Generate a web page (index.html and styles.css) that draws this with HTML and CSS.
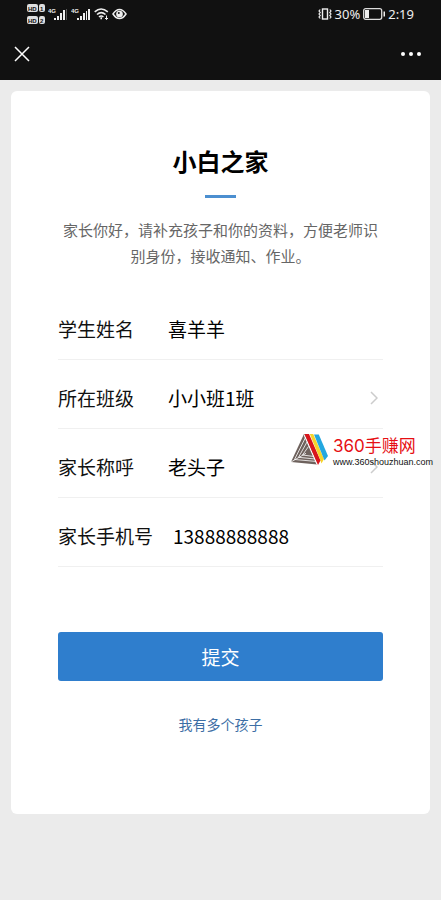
FILE: index.html
```html
<!DOCTYPE html>
<html lang="zh-CN">
<head>
<meta charset="utf-8">
<meta name="viewport" content="width=device-width, initial-scale=1">
<title>小白之家</title>
<link rel="stylesheet" href="styles.css">
</head>
<body>
<header class="top">
  <div class="status">
    <div class="status-group">
      <svg width="18" height="22" viewBox="0 0 18 22" aria-hidden="true">
        <g fill="#dedede">
          <rect x="0" y="1" width="11" height="8" rx="2"/><rect x="12" y="1" width="6" height="8" rx="2"/>
          <rect x="0" y="13" width="11" height="8" rx="2"/><rect x="12" y="13" width="6" height="8" rx="2"/>
        </g>
        <g class="hd-text">
          <text x="1" y="7.5">HD</text><text x="13" y="7.5">1</text>
          <text x="1" y="19.5">HD</text><text x="13" y="19.5">2</text>
        </g>
      </svg>
      <svg width="20" height="14" viewBox="0 0 20 14" aria-hidden="true">
        <text class="net-text" x="0" y="6">4G</text>
        <path fill="#eee" d="M6 11h2v2H6zM9 9h2v4H9zM12 6h2v7h-2zM15 3h2v10h-2z"/><path fill="#555" d="M18 2h1v11h-1z"/>
      </svg>
      <svg width="20" height="14" viewBox="0 0 20 14" aria-hidden="true">
        <text class="net-text" x="0" y="6">4G</text>
        <path fill="#eee" d="M6 11h2v2H6zM9 9h2v4H9zM12 6h2v7h-2zM15 4h1v9h-1zM17 2h2v11h-2z"/>
      </svg>
      <svg width="15" height="14" viewBox="0 0 15 14" fill="none" stroke="#eee" stroke-width="1.6" aria-hidden="true">
        <path d="M.7 4.8Q7-.8 13.8 4.8M3 7.5Q7.2 3.8 11.5 7.5M5 10Q7.2 8 9.4 10"/>
        <path d="M7.2 10.3v2"/><path stroke-width="1" d="M12.5 8.5v4m-1.5-1.5 1.5 1.5 1.5-1.5"/>
      </svg>
      <svg width="15" height="12" viewBox="0 0 15 12" fill="none" stroke="#eee" stroke-width="1.5" aria-hidden="true">
        <path d="M1 6Q4 1.5 7.5 1.5T14 6Q11 10.5 7.5 10.5T1 6Z"/><circle cx="7.5" cy="6" r="2.6" fill="#eee"/><circle cx="6.8" cy="5" r="1" fill="#111" stroke="none"/>
      </svg>
    </div>
    <div class="status-group status-right">
      <svg width="14" height="12" viewBox="0 0 14 12" fill="none" stroke="#eee" aria-hidden="true">
        <rect x="4.5" y="1" width="5" height="10" stroke-width="1.4"/>
        <path stroke-width="1.2" d="M2.2 1.5 1 3l1.2 1.5L1 6l1.2 1.5L1 9l1.2 1.5M11.8 1.5 13 3l-1.2 1.5L13 6l-1.2 1.5L13 9l-1.2 1.5"/>
      </svg>
      <span>30%</span>
      <svg width="22" height="12" viewBox="0 0 22 12" aria-hidden="true">
        <rect x=".7" y=".7" width="18" height="10.6" rx="2" fill="none" stroke="#ddd" stroke-width="1.3"/>
        <path fill="#eee" d="M2 2h4v8H2zM20.5 3.5H22v5h-1.5z"/>
      </svg>
      <time>2:19</time>
    </div>
  </div>
  <nav class="nav">
    <button class="icon-button" type="button" aria-label="关闭">
      <svg width="16" height="16" viewBox="0 0 16 16" stroke="#fff" stroke-width="1.5"><path d="m1 1 14 14M15 1 1 15"/></svg>
    </button>
    <button class="icon-button" type="button" aria-label="更多">
      <svg width="20" height="4" viewBox="0 0 20 4" fill="#fff"><circle cx="2" cy="2" r="2"/><circle cx="10" cy="2" r="2"/><circle cx="18" cy="2" r="2"/></svg>
    </button>
  </nav>
</header>

<main class="card">
  <h1 class="title">小白之家</h1>
  <p class="intro">家长你好，请补充孩子和你的资料，方便老师识别身份，接收通知、作业。</p>
  <form>
    <div class="row">
      <label for="student">学生姓名</label>
      <input id="student" type="text" value="喜羊羊">
    </div>
    <div class="row">
      <label for="grade">所在班级</label>
      <select id="grade"><option>小小班1班</option></select>
      <svg class="chevron" width="8" height="14" viewBox="0 0 8 14"><path d="m1 1 6 6-6 6"/></svg>
    </div>
    <div class="row">
      <label for="relation">家长称呼</label>
      <select id="relation"><option>老头子</option></select>
      <svg class="chevron" width="8" height="14" viewBox="0 0 8 14"><path d="m1 1 6 6-6 6"/></svg>
    </div>
    <div class="row row-phone">
      <label for="phone">家长手机号</label>
      <input id="phone" type="tel" value="13888888888">
    </div>
    <button class="submit" type="submit">提交</button>
  </form>
  <a class="more" href="#">我有多个孩子</a>

  <div class="mark">
    <svg width="38" height="33" viewBox="0 0 38 33" aria-hidden="true">
      <path fill="#6e625d" d="M13 1 0 29l26 2.500V27L15 2Z"/>
      <g fill="none" stroke="#fff" stroke-width=".8">
        <path d="M14.500 4.500 3.500 26.500 26 28.500"/>
        <path d="M16 9 7.500 24.300 24 26"/>
        <path d="M17.500 13.500 11.500 22 23 23.500"/>
        <path d="M0 29 15 20.300"/>
      </g>
      <path fill="#fff" d="M13.500 1 27 31.500h-1.500L13 3Z"/>
      <path fill="#d9151c" d="M13.500 1H18l11.500 26.500-2.500 4.500Z"/>
      <path fill="#f6d42b" d="M18.800 1h3.400l10.800 25-2.500 4.500-1-3Z"/>
      <path fill="#23a7df" d="M23 1.500h4.800L37 23l-3.500 4.500Z"/>
    </svg>
    <div class="mark-text">
      <strong>360手赚网</strong>
      <span>www.360shouzhuan.com</span>
    </div>
  </div>
</main>
</body>
</html>
```
FILE: styles.css
```css
* {
  box-sizing: border-box;
}

body {
  margin: 0;
  background: #ebebeb;
  color: #111;
  font-family: "Noto Sans CJK SC", sans-serif;
  font-size: 19px;
}

button,
input,
select {
  margin: 0;
  padding: 0;
  border: 0;
  border-radius: 0;
  background: none;
  color: inherit;
  font: inherit;
}

svg {
  display: block;
  flex: none;
}

.top {
  background: #111;
  color: #eee;
}

.status {
  display: flex;
  justify-content: space-between;
  height: 28px;
  padding: 0 27px;
}

.status-group {
  display: flex;
  align-items: center;
  gap: 3px;
}

.status-right {
  font-family: "Noto Sans", sans-serif;
  font-size: 13px;
}

.hd-text {
  fill: #111;
  font: bold 6px "Liberation Sans", sans-serif;
}

.net-text {
  fill: #eee;
  font: bold 6px "Liberation Sans", sans-serif;
}

.nav {
  display: flex;
  align-items: center;
  justify-content: space-between;
  height: 52px;
  padding: 0 20px 0 14px;
}

.icon-button {
  display: flex;
}

.card {
  position: relative;
  margin: 11px;
  padding: 52px 47px 77px;
  border-radius: 6px;
  background: #fff;
}

.title {
  margin: 0;
  color: #000;
  font-size: 24px;
  line-height: 36px;
  text-align: center;
}

.title::after {
  content: "";
  display: block;
  width: 31px;
  height: 3px;
  margin: 16px auto 19px;
  background: #4c8fd0;
}

.intro {
  margin: 0 0 22px;
  color: #666;
  font-size: 15px;
  line-height: 26px;
  text-align: center;
}

.row {
  display: flex;
  align-items: center;
  height: 69px;
  padding: 7px 5px 0 0;
  border-bottom: 1px solid #f0f0f0;
}

.row label {
  flex: 0 0 110px;
}

.row input,
.row select {
  flex: 1;
  min-width: 0;
  appearance: none;
  color: #000;
}

.row-phone label {
  flex-basis: 115px;
}

.chevron {
  fill: none;
  stroke: #ccc;
  stroke-width: 1.5;
}

.submit {
  display: block;
  width: 100%;
  height: 49px;
  margin-top: 65px;
  border-radius: 3px;
  background: #2f7ecd;
  color: #fff;
}

.more {
  display: block;
  margin-top: 30px;
  color: #3c6ea5;
  font-size: 14px;
  line-height: 26px;
  text-align: center;
  text-decoration: none;
}

.mark {
  position: absolute;
  top: 342px;
  right: -3px;
  display: flex;
  gap: 4px;
}

.mark-text {
  display: flex;
  flex-direction: column;
  padding-top: 2px;
}

.mark strong {
  color: #e60f14;
  font: 400 17px/22px Inter, "Noto Sans CJK SC", sans-serif;
}

.mark span {
  color: #111;
  font: 9px/10px "Liberation Sans", sans-serif;
}
```
